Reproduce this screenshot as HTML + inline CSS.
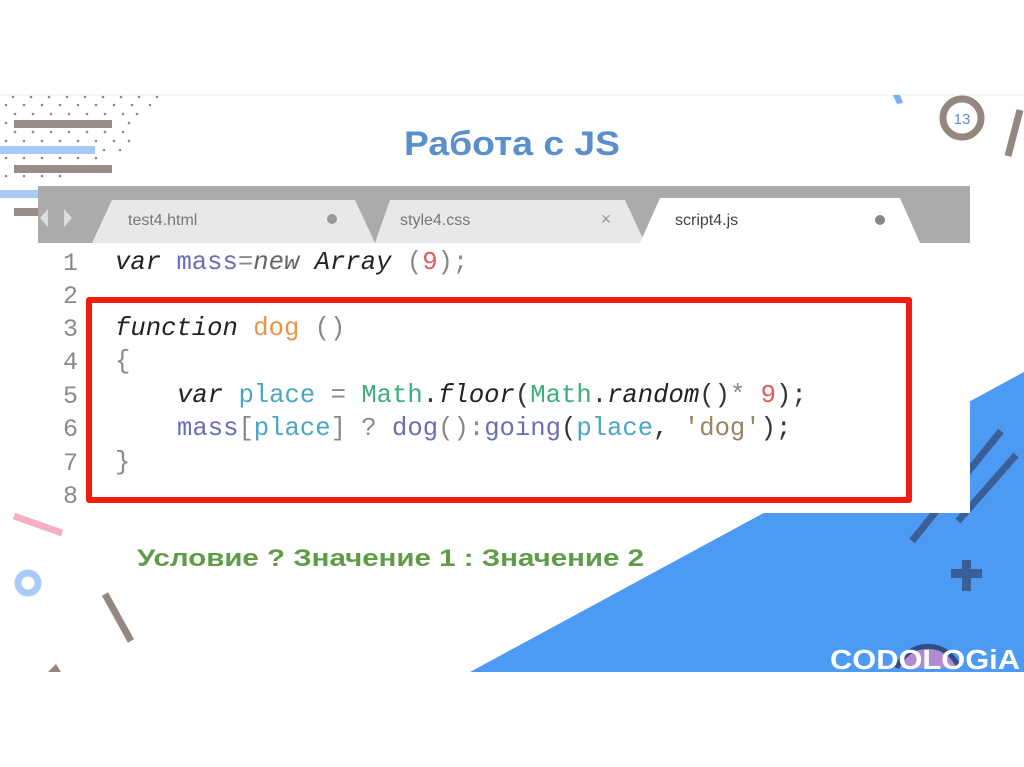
<!DOCTYPE html>
<html><head><meta charset="utf-8"><style>
body{margin:0;width:1024px;height:767px;background:#fff;overflow:hidden;position:relative;font-family:"Liberation Sans",sans-serif}
.abs{position:absolute}
.code{position:absolute;left:38px;top:243px;width:932px;height:270px;background:#fff}
.ln{position:absolute;left:0;width:40px;text-align:right;font-family:"Liberation Mono",monospace;font-size:25px;color:#8a8a8a}
.cl{position:absolute;left:115px;font-family:"Liberation Mono",monospace;font-size:25.6px;color:#333;white-space:pre}
i{font-style:italic;color:#222}
.p{color:#6a6fb5}.o{color:#e8964e}.t{color:#4aa6c3}.g{color:#3fae7a}.r{color:#e05a5a}.s{color:#9b8363}.gr{color:#888}
</style></head><body>
<svg class="abs" style="left:0;top:0" width="1024" height="767">
<line x1="0" y1="95" x2="1024" y2="95" stroke="#eee"/>
<polygon points="470,672 1024,372 1024,672" fill="#4d9af5"/>
<g fill="#888">
<circle cx="13" cy="97" r="1.3"/><circle cx="31" cy="97" r="1.3"/><circle cx="49" cy="97" r="1.3"/><circle cx="67" cy="97" r="1.3"/><circle cx="85" cy="97" r="1.3"/><circle cx="103" cy="97" r="1.3"/><circle cx="121" cy="97" r="1.3"/><circle cx="139" cy="97" r="1.3"/><circle cx="157" cy="97" r="1.3"/>
<circle cx="6" cy="105" r="1.3"/><circle cx="24" cy="105" r="1.3"/><circle cx="42" cy="105" r="1.3"/><circle cx="60" cy="105" r="1.3"/><circle cx="78" cy="105" r="1.3"/><circle cx="96" cy="105" r="1.3"/><circle cx="114" cy="105" r="1.3"/><circle cx="132" cy="105" r="1.3"/><circle cx="150" cy="105" r="1.3"/>
<circle cx="15" cy="114" r="1.3"/><circle cx="33" cy="114" r="1.3"/><circle cx="51" cy="114" r="1.3"/><circle cx="69" cy="114" r="1.3"/><circle cx="87" cy="114" r="1.3"/><circle cx="105" cy="114" r="1.3"/><circle cx="123" cy="114" r="1.3"/><circle cx="137" cy="114" r="1.3"/>
<circle cx="6" cy="123" r="1.3"/><circle cx="129" cy="123" r="1.3"/>
<circle cx="15" cy="132" r="1.3"/><circle cx="33" cy="132" r="1.3"/><circle cx="51" cy="132" r="1.3"/><circle cx="69" cy="132" r="1.3"/><circle cx="87" cy="132" r="1.3"/><circle cx="105" cy="132" r="1.3"/><circle cx="123" cy="132" r="1.3"/>
<circle cx="6" cy="141" r="1.3"/><circle cx="24" cy="141" r="1.3"/><circle cx="42" cy="141" r="1.3"/><circle cx="60" cy="141" r="1.3"/><circle cx="78" cy="141" r="1.3"/><circle cx="96" cy="141" r="1.3"/><circle cx="114" cy="141" r="1.3"/><circle cx="129" cy="141" r="1.3"/>
<circle cx="104" cy="150" r="1.3"/><circle cx="120" cy="150" r="1.3"/>
<circle cx="6" cy="158" r="1.3"/><circle cx="24" cy="158" r="1.3"/><circle cx="42" cy="158" r="1.3"/><circle cx="60" cy="158" r="1.3"/><circle cx="78" cy="158" r="1.3"/><circle cx="96" cy="158" r="1.3"/>
<circle cx="6" cy="176" r="1.3"/><circle cx="24" cy="176" r="1.3"/><circle cx="42" cy="176" r="1.3"/><circle cx="60" cy="176" r="1.3"/>
</g>
<rect x="14" y="120" width="98" height="8" fill="#9a8c88"/>
<rect x="0" y="146" width="95" height="8" fill="#a8cbf5"/>
<rect x="14" y="165" width="98" height="8" fill="#9a8c88"/>
<rect x="0" y="190" width="40" height="8" fill="#a8cbf5"/>
<rect x="14" y="208" width="26" height="8" fill="#9a8c88"/>
<polygon points="893,95 900,95 903,103 897,104" fill="#7ab0f0"/>
<circle cx="962" cy="118" r="19" fill="none" stroke="#958680" stroke-width="7"/>
<text x="962" y="124" font-size="15" fill="#5b8fcb" text-anchor="middle" font-family="Liberation Sans">13</text>
<line x1="1020" y1="110" x2="1008" y2="156" stroke="#958680" stroke-width="7"/>
<line x1="14" y1="516" x2="62" y2="533" stroke="#f4b0c0" stroke-width="7"/>
<circle cx="28" cy="583" r="10" fill="none" stroke="#a8cbf5" stroke-width="7"/>
<line x1="105" y1="594" x2="131" y2="641" stroke="#958680" stroke-width="7"/>
<polygon points="48,672 56,664 61,672" fill="#958680"/>
<line x1="912" y1="541" x2="1001" y2="431" stroke="#3a5e96" stroke-width="7"/>
<line x1="958" y1="521" x2="1016" y2="455" stroke="#3a5e96" stroke-width="7"/>
<rect x="951" y="569" width="31" height="9" fill="#3a5e96"/>
<rect x="962" y="560" width="9" height="31" fill="#3a5e96"/>
<path d="M897,668 a33,33 0 0 1 62,0" fill="#b08ccf" stroke="#2f4d80" stroke-width="5"/>
<text x="830" y="669" font-size="28" font-weight="bold" fill="#fff" font-family="Liberation Sans" textLength="190" lengthAdjust="spacingAndGlyphs">CODOLOGiA</text>
<text x="512" y="155" font-size="34" font-weight="bold" fill="#5b8fcb" text-anchor="middle" font-family="Liberation Sans" textLength="216" lengthAdjust="spacingAndGlyphs">Работа с JS</text>
<rect x="38" y="186" width="932" height="57" fill="#ababab"/>
<polygon points="40,218 48,209 48,227" fill="#ddd"/><polygon points="72,218 64,209 64,227" fill="#ddd"/>
<polygon points="92,243 112,200 355,200 375,243" fill="#e8e8e8"/>
<polygon points="375,243 390,200 625,200 645,243" fill="#e8e8e8"/>
<polygon points="640,243 660,198 900,198 920,243" fill="#fff"/>
<circle cx="332" cy="219" r="5" fill="#999"/>
<text x="606" y="225" font-size="18" fill="#999" text-anchor="middle">×</text>
<circle cx="880" cy="220" r="5" fill="#888"/>
<text x="128" y="225" font-size="16" fill="#777" font-family="Liberation Sans">test4.html</text>
<text x="400" y="225" font-size="16" fill="#777" font-family="Liberation Sans">style4.css</text>
<text x="675" y="225" font-size="16" fill="#444" font-family="Liberation Sans">script4.js</text>
</svg>
<div class="code">
<div class="ln" style="top:6px">1</div><div class="ln" style="top:39px">2</div><div class="ln" style="top:72px">3</div><div class="ln" style="top:105px">4</div><div class="ln" style="top:139px">5</div><div class="ln" style="top:172px">6</div><div class="ln" style="top:206px">7</div><div class="ln" style="top:239px">8</div>
<div class="cl" style="top:5px;left:77px"><i>var</i> <span class="p">mass</span><span class="gr">=</span><i style="color:#666">new</i> <i>Array</i> <span class="gr">(</span><span class="r">9</span><span class="gr">);</span></div>
<div class="cl" style="top:71px;left:77px"><i>function</i> <span class="o">dog</span> <span class="gr">()</span></div>
<div class="cl" style="top:104px;left:77px"><span class="gr">{</span></div>
<div class="cl" style="top:138px;left:139px"><i>var</i> <span class="t">place</span> <span class="gr">=</span> <span class="g">Math</span>.<i>floor</i>(<span class="g">Math</span>.<i>random</i>()<span class="gr">*</span> <span class="r">9</span>);</div>
<div class="cl" style="top:171px;left:139px"><span class="p">mass</span><span class="gr">[</span><span class="t">place</span><span class="gr">] ? </span><span class="p">dog</span><span class="gr">():</span><span class="p">going</span>(<span class="t">place</span>, <span class="s">'dog'</span>);</div>
<div class="cl" style="top:205px;left:77px"><span class="gr">}</span></div>
</div>
<div class="abs" style="left:86px;top:297px;width:814px;height:194px;border:6px solid #f21b0f;border-radius:3px"></div>
<svg class="abs" style="left:0;top:0" width="1024" height="767">
<text x="137" y="566" font-size="24" font-weight="bold" fill="#5e9c48" font-family="Liberation Sans" textLength="507" lengthAdjust="spacingAndGlyphs">Условие ? Значение 1 : Значение 2</text>
</svg>
</body></html>
